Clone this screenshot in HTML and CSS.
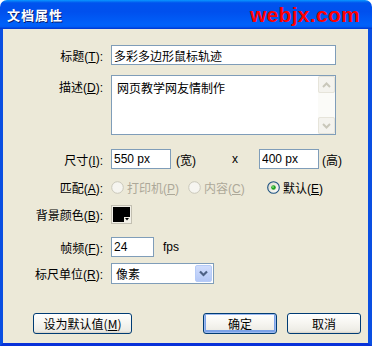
FILE: index.html
```html
<!DOCTYPE html>
<html lang="zh-CN">
<head>
  <meta charset="UTF-8">
  <title>文档属性</title>
  <link rel="stylesheet" href="styles.css">
</head>
<body>

  <div class="window">
    <!-- Title bar -->
    <div class="titlebar">
      <span class="title">文档属性</span>
      <span class="brand">webjx.com</span>
    </div>

    <div class="frame">
      <!-- 标题 -->
      <div class="row r-title">
        <label class="lbl">标题(<u>T</u>):</label>
        <input class="text w-title" type="text" value="多彩多边形鼠标轨迹">
      </div>

      <!-- 描述 -->
      <div class="row r-desc">
        <label class="lbl lbl-top">描述(<u>D</u>):</label>
        <div class="textarea">
          <div class="ta-text">网页教学网友情制作</div>
          <div class="scrollbar">
            <div class="sb-btn">
              <svg width="9" height="6" viewBox="0 0 9 6"><polyline points="1,5 4.5,1.5 8,5" fill="none" stroke="#c9c7ba" stroke-width="2"/></svg>
            </div>
            <div class="sb-track"></div>
            <div class="sb-btn">
              <svg width="9" height="6" viewBox="0 0 9 6"><polyline points="1,1 4.5,4.5 8,1" fill="none" stroke="#c9c7ba" stroke-width="2"/></svg>
            </div>
          </div>
        </div>
      </div>

      <!-- 尺寸 -->
      <div class="row r-size">
        <label class="lbl">尺寸(<u>I</u>):</label>
        <input class="text w-size" type="text" value="550 px">
        <span class="unit-w">(宽)</span>
        <span class="times">x</span>
        <input class="text w-size" type="text" value="400 px">
        <span class="unit-h">(高)</span>
      </div>

      <!-- 匹配 -->
      <div class="row r-match">
        <label class="lbl">匹配(<u>A</u>):</label>
        <span class="radio disabled r1">
          <svg width="13" height="13" viewBox="0 0 13 13"><circle cx="6.5" cy="6.5" r="5.8" fill="#f6f5f0" stroke="#cac8bb" stroke-width="1"/></svg>
          <span>打印机(<u>P</u>)</span>
        </span>
        <span class="radio disabled r2">
          <svg width="13" height="13" viewBox="0 0 13 13"><circle cx="6.5" cy="6.5" r="5.8" fill="#f6f5f0" stroke="#cac8bb" stroke-width="1"/></svg>
          <span>内容(<u>C</u>)</span>
        </span>
        <span class="radio">
          <svg width="13" height="13" viewBox="0 0 13 13">
            <defs>
              <linearGradient id="rg" x1="0" y1="0" x2="1" y2="1">
                <stop offset="0" stop-color="#dcd9c9"/>
                <stop offset="1" stop-color="#ffffff"/>
              </linearGradient>
            </defs>
            <circle cx="6.5" cy="6.5" r="5.8" fill="url(#rg)" stroke="#1c5180" stroke-width="1.1"/>
            <circle cx="6.5" cy="6.5" r="2.3" fill="#21a121"/>
            <circle cx="6" cy="6" r="0.9" fill="#7fe07a"/>
          </svg>
          <span>默认(<u>E</u>)</span>
        </span>
      </div>

      <!-- 背景颜色 -->
      <div class="row r-color">
        <label class="lbl">背景颜色(<u>B</u>):</label>
        <svg class="swatch" width="21" height="19" viewBox="0 0 21 19">
          <rect x="0.5" y="0.5" width="20" height="18" fill="#f1efe6" stroke="#c3c0b2"/>
          <rect x="2" y="2" width="17" height="15" fill="#000"/>
          <rect x="13" y="12" width="6" height="5" fill="#f1efe6"/>
          <polygon points="14,13 18,13 16,15.5" fill="#000"/>
        </svg>
      </div>

      <!-- 帧频 -->
      <div class="row r-fps">
        <label class="lbl">帧频(<u>F</u>):</label>
        <input class="text w-fps" type="text" value="24">
        <span class="fps">fps</span>
      </div>

      <!-- 标尺单位 -->
      <div class="row r-unit">
        <label class="lbl">标尺单位(<u>R</u>):</label>
        <div class="select">
          <span class="sel-text">像素</span>
          <span class="sel-btn">
            <svg width="9" height="7" viewBox="0 0 9 7"><polyline points="1,1.5 4.5,5 8,1.5" fill="none" stroke="#4d6185" stroke-width="2.2"/></svg>
          </span>
        </div>
      </div>

      <!-- Buttons -->
      <div class="buttons">
        <button class="btn btn-default-val">设为默认值(<u>M</u>)</button>
        <div class="btn-group">
          <button class="btn btn-primary">确定</button>
          <button class="btn">取消</button>
        </div>
      </div>
    </div>
  </div>

</body>
</html>
```

FILE: styles.css
```css
* { margin: 0; padding: 0; box-sizing: border-box; }
body { width: 372px; height: 346px; overflow: hidden; background: #fff; font-family: "Liberation Sans", "Noto Sans CJK SC", sans-serif; font-size: 12px; color: #000; }

.window { width: 372px; height: 346px; display: flex; flex-direction: column; }

/* Title bar */
.titlebar {
  height: 29px;
  display: flex;
  align-items: center;
  justify-content: space-between;
  padding: 0 12px 0 7px;
  border-radius: 7px 7px 0 0;
  background: linear-gradient(to bottom, #0997ff 0%, #0053ee 10%, #0050ee 40%, #0061fa 85%, #005bf5 93%, #003dd7 97%, #003dd7 100%);
}
.title { color: #fff; font-family: "Noto Sans CJK SC", sans-serif; font-weight: bold; font-size: 13px; letter-spacing: 1px; text-shadow: 1px 1px 0 #0a1e6e; }
.brand { color: #ff0000; font-weight: bold; font-size: 21px; letter-spacing: 0.3px; }

.frame {
  flex: 1;
  display: flex;
  flex-direction: column;
  background: #ece9d8;
  border-left: 3px solid #0a4fe2;
  border-right: 4px solid #0a4fe2;
  border-bottom: 3px solid #0831d9;
}

/* Rows */
.row { display: flex; align-items: center; }
.lbl { width: 100px; margin-right: 8px; text-align: right; white-space: nowrap; }
.lbl-top { align-self: flex-start; padding-top: 3px; }

.r-title { margin-top: 16px; height: 20px; }
.r-desc { margin-top: 10px; height: 60px; align-items: flex-start; }
.r-size { margin-top: 14px; height: 20px; }
.r-match { margin-top: 10px; height: 16px; }
.r-color { margin-top: 10px; height: 19px; }
.r-fps { margin-top: 13px; height: 20px; }
.r-unit { margin-top: 6px; height: 21px; }

.text {
  height: 20px;
  border: 1px solid #7f9db9;
  background: #fff;
  padding: 0 2px;
  font-family: "Liberation Sans", "Noto Sans CJK SC", sans-serif;
  font-size: 12px;
  color: #000;
  outline: none;
}
.w-title { width: 225px; }
.w-size { width: 60px; }
.w-fps { width: 43px; }

.unit-w { width: 56px; margin-left: 5px; }
.times { width: 27px; }
.unit-h { margin-left: 3px; }
.fps { margin-left: 9px; }

/* Description box */
.textarea { width: 225px; height: 60px; border: 1px solid #7f9db9; background: #fff; display: flex; }
.ta-text { flex: 1; padding: 3px 0 0 5px; }
.scrollbar { width: 17px; display: flex; flex-direction: column; background: #f7f6f1; }
.sb-btn {
  height: 17px;
  display: flex;
  align-items: center;
  justify-content: center;
  background: #f4f3ee;
  border: 1px solid #e6e4da;
  border-radius: 2px;
}
.sb-track { flex: 1; background: #fbfbf8; }

/* Radios */
.radio { display: flex; align-items: center; gap: 3px; }
.radio.disabled { color: #aca899; }
.r1 { width: 77px; }
.r2 { width: 79px; }

.swatch { display: block; }

/* Select */
.select { width: 103px; height: 21px; border: 1px solid #7f9db9; background: #fff; display: flex; align-items: center; padding: 1px; }
.sel-text { flex: 1; padding-left: 3px; }
.sel-btn {
  width: 17px;
  height: 17px;
  display: flex;
  align-items: center;
  justify-content: center;
  border: 1px solid #b6cbf7;
  border-radius: 2px;
  background: linear-gradient(to bottom, #d0ddfd, #b4c8f6);
}

/* Buttons */
.buttons { margin-top: 29px; padding: 0 7px 0 30px; display: flex; justify-content: space-between; }
.btn-group { display: flex; gap: 10px; }
.btn {
  height: 21px;
  width: 74px;
  border: 1px solid #003c74;
  border-radius: 3px;
  background: linear-gradient(to bottom, #ffffff 0%, #f6f5f0 50%, #ecebe4 90%, #d6d0c5 100%);
  font-family: "Noto Sans CJK SC", sans-serif;
  font-size: 12px;
  color: #000;
}
.btn-default-val { width: 99px; }
.btn-primary { box-shadow: inset 0 0 0 1px #9dbaf0, inset 0 -1px 0 2px #7ba2e7; }
```
